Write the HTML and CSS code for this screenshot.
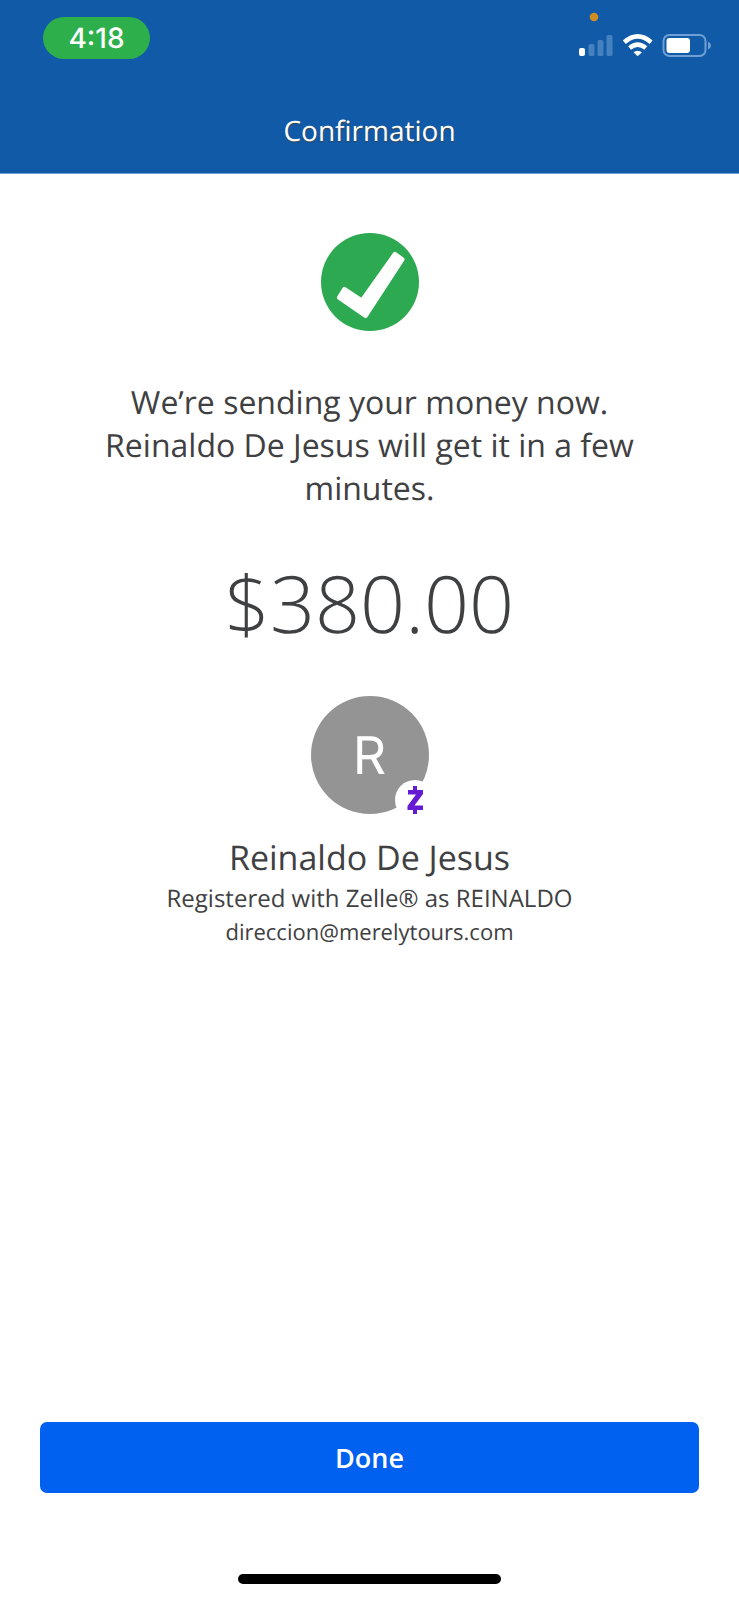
FILE: index.html
```html
<!DOCTYPE html>
<html lang="en">
<head>
<meta charset="utf-8">
<meta name="viewport" content="width=device-width, initial-scale=1">
<title>Confirmation</title>
<link rel="stylesheet" href="styles.css">
</head>
<body>
<div class="screen">
  <header class="header">
    <div class="status-bar">
      <span class="time">4:18</span>
      <svg class="status-icons" width="132" height="48" viewBox="0 0 132 48" aria-hidden="true">
        <circle cx="15" cy="5" r="4.3" fill="#cf8c25"/>
        <rect x="0" y="36" width="6" height="8" rx="2" fill="#fff"/>
        <g fill="#4580bf">
          <rect x="9.500" y="32" width="6" height="12" rx="1.500"/>
          <rect x="18.500" y="28" width="6" height="16" rx="1.500"/>
          <rect x="27.500" y="23" width="6" height="21" rx="1.500"/>
        </g>
        <g fill="none" stroke="#fff" stroke-width="4.600">
          <path d="M45.300 30.200Q58.700 18.600 72.100 30.200"/>
          <path d="M50.600 36Q58.700 29.400 66.800 36"/>
        </g>
        <path d="M54.500 40.300Q58.700 37.300 62.900 40.300L59.500 43.600Q58.700 44.400 57.900 43.600Z" fill="#fff"/>
        <rect x="84.500" y="23" width="42" height="21" rx="6" fill="none" stroke="#6f9fd4" stroke-width="2"/>
        <rect x="87.500" y="26" width="23.500" height="15" rx="3" fill="#fff"/>
        <path d="M129 29.500Q132 31 132 33.500Q132 36 129 37.500Z" fill="#6f9fd4"/>
      </svg>
    </div>
    <h1 class="title">Confirmation</h1>
  </header>
  <main class="content">
    <svg class="check" width="98" height="98" viewBox="0 0 98 98" role="img" aria-label="Success">
      <circle cx="49" cy="49" r="49" fill="#2da952"/>
      <path d="M18.500 64.500L23.500 56.500L41 68L74 21.500L81 26.500L44.500 82.500Z" fill="#fff" stroke="#fff" stroke-width="5" stroke-linejoin="round"/>
    </svg>
    <p class="message">We’re sending your money now. Reinaldo De Jesus will get it in a few minutes.</p>
    <p class="amount">$380.00</p>
    <div class="avatar">
      <span>R</span>
      <svg class="badge" width="40" height="40" viewBox="0 0 40 40" role="img" aria-label="Zelle">
        <circle cx="20" cy="20" r="20" fill="#fff"/>
        <path d="M18 6h4v4h6v4l-8.500 11.500H28v4.500h-6v4h-4v-4H12.500v-4l8.500-11.500H13V10h5Z" fill="#651bd2"/>
      </svg>
    </div>
    <h2 class="name">Reinaldo De Jesus</h2>
    <p class="registered">Registered with Zelle® as REINALDO</p>
    <p class="email">direccion@merelytours.com</p>
  </main>
  <footer class="footer">
    <button class="done" type="button">Done</button>
    <div class="home-indicator"></div>
  </footer>
</div>
</body>
</html>
```
FILE: styles.css
```css
* {
  box-sizing: border-box;
}

body {
  margin: 0;
  background: #fff;
  color: #3f4042;
  font-family: "Open Sans", sans-serif;
  text-rendering: geometricPrecision;
}

h1, h2, p {
  margin: 0;
  font-weight: 400;
}

.screen {
  min-height: 100vh;
  display: flex;
  flex-direction: column;
}

.header {
  background: #105aa7;
  border-bottom: 1px solid #6f9fd8;
  padding-bottom: 22px;
}

.status-bar {
  display: flex;
  justify-content: space-between;
  align-items: flex-start;
  padding: 12px 28px 0 43px;
}

.time {
  width: 107px;
  margin-top: 5px;
  padding-top: 1px;
  border-radius: 21px;
  background: #2db04b;
  color: #fff;
  font: 500 28px/41px Inter, sans-serif;
  text-align: center;
}

.title {
  margin-top: 52px;
  color: #fff;
  font-size: 28px;
  line-height: 39px;
  text-align: center;
  text-shadow: 0 1px 1px #444;
}

.content {
  flex: 1;
  display: flex;
  flex-direction: column;
  align-items: center;
  padding: 59px 80px 32px;
  text-align: center;
}

.message {
  max-width: 560px;
  margin-top: 50px;
  font-size: 32px;
  line-height: 43px;
}

.amount {
  margin-top: 54px;
  font-size: 79px;
  font-weight: 300;
  line-height: 80px;
}

.avatar {
  position: relative;
  width: 118px;
  height: 118px;
  margin-top: 52px;
  border-radius: 50%;
  background: #949494;
  color: #fff;
  font: 400 52px/120px Inter, sans-serif;
}

.badge {
  position: absolute;
  right: -6px;
  bottom: -6px;
}

.name {
  margin-top: 20px;
  font-size: 34px;
  line-height: 47px;
}

.registered {
  font-size: 24px;
  line-height: 35px;
}

.email {
  font-size: 22px;
  line-height: 32px;
}

.footer {
  padding: 0 40px 16px;
}

.done {
  display: block;
  width: 100%;
  height: 71px;
  border: 0;
  border-radius: 7px;
  background: #0060f0;
  color: #fff;
  font: 600 27px/36px "Open Sans", sans-serif;
}

.home-indicator {
  width: 40%;
  height: 10px;
  margin: 81px auto 0;
  border-radius: 5px;
  background: #000;
}
```
